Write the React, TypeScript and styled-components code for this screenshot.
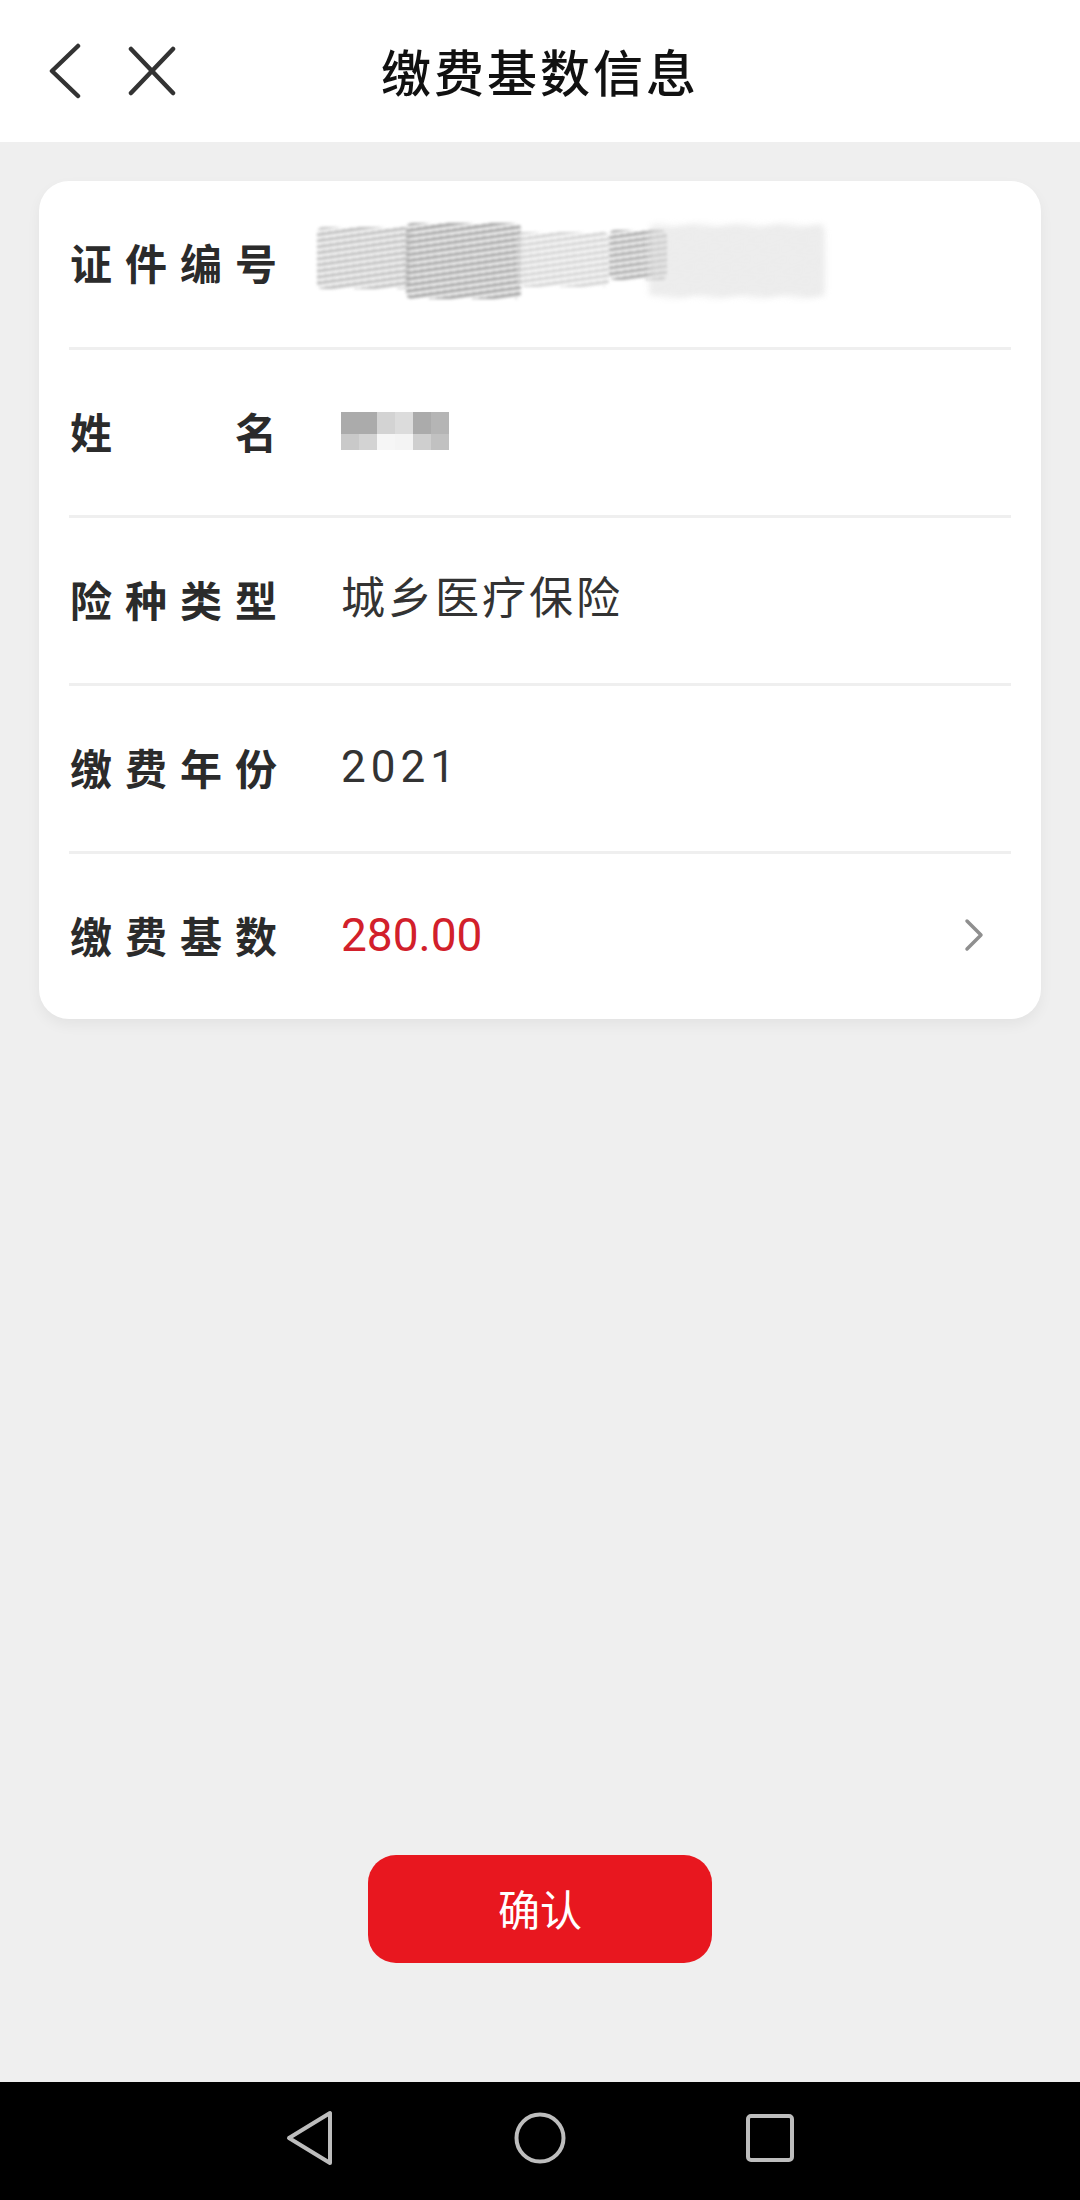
import React from "react";
import styled, { createGlobalStyle } from "styled-components";

const Global = createGlobalStyle`
  html, body { margin: 0; padding: 0; background: #efefef; }
  body { font-family: Roboto, "Noto Sans CJK SC", sans-serif; }
  * { box-sizing: border-box; }
`;

const Page = styled.div`
  display: flex;
  flex-direction: column;
  height: 100vh;
  min-height: 2200px;
  background: #efefef;
`;

const Header = styled.header`
  height: 142px;
  flex: none;
  background: #ffffff;
  display: grid;
  grid-template-columns: 1fr auto 1fr;
  align-items: center;
`;

const HeaderLeft = styled.div`
  display: flex;
  align-items: center;
  padding-left: 48px;
  gap: 46px;
`;

const IconButton = styled.button`
  border: none;
  background: none;
  padding: 0;
  display: flex;
  align-items: center;
  justify-content: center;
  color: #333333;
`;

const Title = styled.h1`
  margin: 0;
  font-family: "Noto Sans CJK SC", sans-serif;
  font-size: 50px;
  font-weight: 500;
  letter-spacing: 3px;
  color: #111111;
  margin-top: -2px;
`;

const Main = styled.main`
  flex: 1;
  display: flex;
  flex-direction: column;
  padding: 39px 39px 119px 39px;
`;

const Card = styled.section`
  background: #ffffff;
  border-radius: 30px;
  padding: 0 30px;
  box-shadow: 0 6px 14px rgba(0, 0, 0, 0.05);
`;

const Row = styled.div`
  height: 166px;
  display: flex;
  align-items: center;
  padding-bottom: 4px;
  & + & {
    border-top: 3px solid #efefef;
    height: 168px;
  }
`;

const Label = styled.div`
  width: 210px;
  flex: none;
  display: flex;
  justify-content: space-between;
  padding-left: 1px;
  padding-right: 2px;
  margin-right: 62px;
  font-family: "Noto Sans CJK SC", sans-serif;
  font-size: 42px;
  font-weight: 700;
  color: #2b2b2b;
  line-height: 1;
`;

const Value = styled.div<{ $tone?: "normal" | "accent"; $spacing?: number }>`
  flex: 1;
  font-family: Roboto, "Noto Sans CJK SC", sans-serif;
  font-size: ${(p) => (p.$tone === "accent" ? "46px" : "44px")};
  letter-spacing: ${(p) => p.$spacing ?? (p.$tone === "accent" ? 0 : 3)}px;
  font-weight: 400;
  color: ${(p) => (p.$tone === "accent" ? "#d2202b" : "#333333")};
  line-height: 1;
  display: flex;
  align-items: center;
`;

const Chevron = styled.svg`
  flex: none;
  margin-right: 26px;
`;

const Scribble = styled.div`
  display: flex;
  align-items: flex-start;
  margin-left: -24px;
  height: 78px;
`;

const Smudge = styled.div<{ $w: number; $h: number; $top: number; $tone: string; $overlap?: number; $blur?: number }>`
  width: ${(p) => p.$w}px;
  height: ${(p) => p.$h}px;
  margin-top: ${(p) => p.$top}px;
  margin-left: ${(p) => -(p.$overlap ?? 0)}px;
  background:
    repeating-linear-gradient(
      172deg,
      ${(p) => p.$tone} 0px,
      ${(p) => p.$tone} 3px,
      rgba(255, 255, 255, 0.35) 4px,
      rgba(255, 255, 255, 0.1) 6px
    );
  filter: blur(${(p) => p.$blur ?? 1.6}px);
  border-radius: 6px;
  opacity: 0.9;
`;

const Pixelated = styled.div`
  display: grid;
  grid-template-columns: repeat(6, 18px);
  grid-template-rows: 22px 16px;
  filter: blur(0.4px);
`;

const Pixel = styled.div<{ $c: string }>`
  background: ${(p) => p.$c};
`;

const Footer = styled.div`
  display: flex;
  justify-content: center;
`;

const ConfirmButton = styled.button`
  width: 344px;
  height: 108px;
  border: none;
  border-radius: 28px;
  background: #e8171f;
  color: #ffffff;
  font-family: "Noto Sans CJK SC", sans-serif;
  font-size: 42px;
  font-weight: 400;
  letter-spacing: 0;
  display: flex;
  align-items: center;
  justify-content: center;
  padding-bottom: 4px;
`;

const NavBar = styled.nav`
  height: 118px;
  flex: none;
  background: #000000;
  display: grid;
  grid-template-columns: repeat(3, 230px);
  justify-content: center;
  align-items: center;
  padding-bottom: 6px;
`;

const NavCell = styled.div`
  display: flex;
  justify-content: center;
  align-items: center;
`;

const justify = (s: string) => s.split("").map((c, i) => <span key={i}>{c}</span>);

const pixels = [
  "#ababab", "#ababab", "#d3d3d3", "#dcdcdc", "#ababab", "#b5b5b5",
  "#c9c9c9", "#d3d3d3", "#f6f6f6", "#f4f4f4", "#cfcfcf", "#c1c1c1",
];

export default function App() {
  return (
    <>
      <Global />
      <Page>
        <Header>
          <HeaderLeft>
            <IconButton aria-label="返回">
              <svg width="34" height="56" viewBox="0 0 34 56">
                <polyline points="30,3 4,28 30,53" fill="none" stroke="#333" strokeWidth="4.5" strokeLinecap="round" strokeLinejoin="round" />
              </svg>
            </IconButton>
            <IconButton aria-label="关闭">
              <svg width="48" height="50" viewBox="0 0 48 50">
                <line x1="3" y1="3" x2="45" y2="47" stroke="#333" strokeWidth="4.5" strokeLinecap="round" />
                <line x1="45" y1="3" x2="3" y2="47" stroke="#333" strokeWidth="4.5" strokeLinecap="round" />
              </svg>
            </IconButton>
          </HeaderLeft>
          <Title>缴费基数信息</Title>
          <div />
        </Header>
        <Main>
          <Card>
            <Row>
              <Label>{justify("证件编号")}</Label>
              <Value>
                <Scribble aria-label="证件编号（已遮挡）">
                  <Smudge $w={93} $h={62} $top={4} $tone="#b9b9b9" />
                  <Smudge $w={115} $h={76} $top={0} $tone="#9c9c9c" $overlap={4} />
                  <Smudge $w={92} $h={55} $top={9} $tone="#cfcfcf" $overlap={4} />
                  <Smudge $w={58} $h={50} $top={7} $tone="#a3a3a3" />
                  <Smudge $w={176} $h={72} $top={2} $tone="#dcdcdc" $overlap={18} $blur={3} />
                </Scribble>
              </Value>
            </Row>
            <Row>
              <Label>{justify("姓名")}</Label>
              <Value>
                <Pixelated aria-label="姓名（已遮挡）">
                  {pixels.map((c, i) => (
                    <Pixel key={i} $c={c} />
                  ))}
                </Pixelated>
              </Value>
            </Row>
            <Row>
              <Label>{justify("险种类型")}</Label>
              <Value>城乡医疗保险</Value>
            </Row>
            <Row>
              <Label>{justify("缴费年份")}</Label>
              <Value $spacing={5}>2021</Value>
            </Row>
            <Row>
              <Label>{justify("缴费基数")}</Label>
              <Value $tone="accent">280.00</Value>
              <Chevron width="22" height="34" viewBox="0 0 22 34">
                <polyline points="4,3 18,17 4,31" fill="none" stroke="#8f8f8f" strokeWidth="3.5" strokeLinecap="round" strokeLinejoin="round" />
              </Chevron>
            </Row>
          </Card>
          <div style={{ flex: 1 }} />
          <Footer>
            <ConfirmButton>确认</ConfirmButton>
          </Footer>
        </Main>
        <NavBar>
          <NavCell>
            <svg width="48" height="56" viewBox="0 0 48 56">
              <polygon points="44,3 44,53 3,28" fill="none" stroke="#bdbdbd" strokeWidth="4" strokeLinejoin="round" />
            </svg>
          </NavCell>
          <NavCell>
            <svg width="54" height="54" viewBox="0 0 54 54">
              <circle cx="27" cy="27" r="23.5" fill="none" stroke="#bdbdbd" strokeWidth="4" />
            </svg>
          </NavCell>
          <NavCell>
            <svg width="50" height="50" viewBox="0 0 50 50">
              <rect x="3" y="3" width="44" height="44" rx="3" fill="none" stroke="#bdbdbd" strokeWidth="4" />
            </svg>
          </NavCell>
        </NavBar>
      </Page>
    </>
  );
}
